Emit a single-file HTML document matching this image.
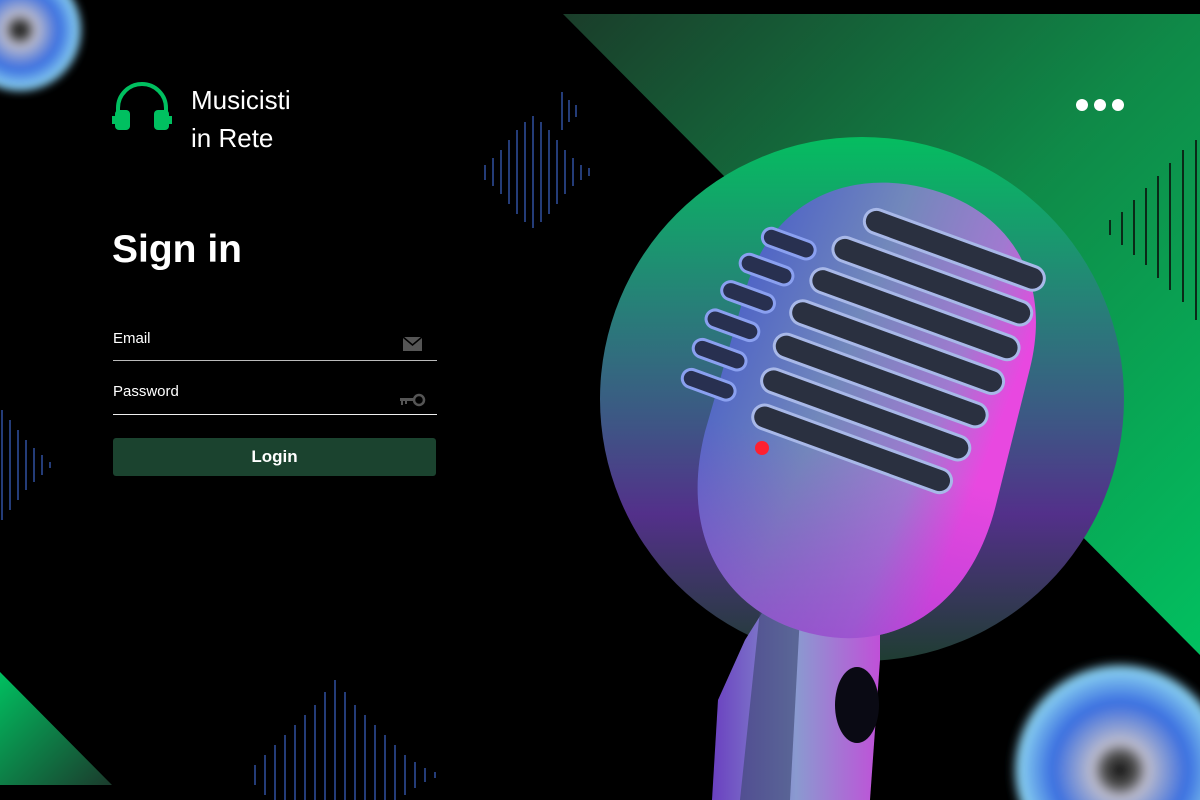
<!DOCTYPE html>
<html><head><style>
html,body{margin:0;width:1200px;height:800px;overflow:hidden}
body{background:#000;position:relative;font-family:"Liberation Sans",sans-serif;color:#fff}
.a{position:absolute}
</style></head><body>
<svg class="a" style="left:0;top:0;display:block" width="1200" height="800">
<defs>
<linearGradient id="tri" x1="0" y1="0" x2="1" y2="1"><stop offset="0" stop-color="#1a3d2a"/><stop offset=".5" stop-color="#0f8a48"/><stop offset="1" stop-color="#02c060"/></linearGradient>
<linearGradient id="circ" x1="0" y1="0" x2="0" y2="1"><stop offset="0" stop-color="#05bd60"/><stop offset=".35" stop-color="#2a7a7a"/><stop offset=".55" stop-color="#3e5585"/><stop offset=".72" stop-color="#53308a"/><stop offset="1" stop-color="#1f3d32"/></linearGradient>
<linearGradient id="bl" x1="0" y1="0" x2="1" y2="1"><stop offset="0" stop-color="#00c060"/><stop offset="1" stop-color="#1b3a2c"/></linearGradient>
<linearGradient id="mic" x1="0" y1="0" x2="1" y2="0.2"><stop offset="0" stop-color="#4a5fc8"/><stop offset=".45" stop-color="#7288bb"/><stop offset=".8" stop-color="#a07ad0"/><stop offset="1" stop-color="#e848e0"/></linearGradient>
<linearGradient id="shade" x1="0" y1="0" x2="0" y2="1"><stop offset="0" stop-color="#9a3ad0" stop-opacity="0"/><stop offset=".6" stop-color="#9a3ad0" stop-opacity="0"/><stop offset="1" stop-color="#9a3ad0" stop-opacity=".6"/></linearGradient>
<linearGradient id="body" x1="0" y1="0" x2="1" y2="0"><stop offset="0" stop-color="#6a40c0"/><stop offset=".5" stop-color="#8a9ad0"/><stop offset="1" stop-color="#c050d8"/></linearGradient>
<radialGradient id="cd"><stop offset="0" stop-color="#111"/><stop offset=".15" stop-color="#555"/><stop offset=".25" stop-color="#bbc"/><stop offset=".6" stop-color="#3a6ee0"/><stop offset=".9" stop-color="#88d0f0"/><stop offset="1" stop-color="#000" stop-opacity="0"/></radialGradient>
<filter id="blur"><feGaussianBlur stdDeviation="4"/></filter>
</defs>
<polygon points="563,14 1200,14 1200,655" fill="url(#tri)"/>
<polygon points="0,672 112,785 0,785" fill="url(#bl)"/>
<ellipse cx="862" cy="399" rx="262" ry="262" fill="url(#circ)"/>
<circle cx="20" cy="30" r="65" fill="url(#cd)" filter="url(#blur)"/>
<circle cx="1120" cy="770" r="112" fill="url(#cd)" filter="url(#blur)"/>
<path d="M745 640 L770 600 L880 615 L880 660 L870 800 L712 800 L718 700 Z" fill="url(#body)"/>
<path d="M760 610 L800 615 L790 800 L740 800 Z" fill="#3a4470" opacity=".6"/>
<ellipse cx="857" cy="705" rx="22" ry="38" fill="#0a0a14"/>
<g transform="rotate(14 865 410)">
<path d="M720 330 C720 230 790 180 870 180 C950 180 1015 230 1015 330 L1015 470 C1015 580 950 640 865 640 C780 640 715 580 715 470 Z" fill="url(#mic)"/>
<path d="M720 330 C720 230 790 180 870 180 C950 180 1015 230 1015 330 L1015 470 C1015 580 950 640 865 640 C780 640 715 580 715 470 Z" fill="url(#shade)"/>
</g>
<g transform="rotate(20 870 350)" fill="#2a3040" stroke="#a8b8e8" stroke-width="3">
<rect x="820" y="215" width="190" height="24" rx="12"/>
<rect x="800" y="252" width="210" height="24" rx="12"/>
<rect x="790" y="289" width="220" height="24" rx="12"/>
<rect x="782" y="326" width="225" height="24" rx="12"/>
<rect x="778" y="363" width="225" height="24" rx="12"/>
<rect x="778" y="400" width="220" height="24" rx="12"/>
<rect x="782" y="437" width="210" height="24" rx="12"/>
</g>
<g transform="rotate(20 760 330)" fill="#283050" stroke="#8aa0f0" stroke-width="3">
<rect x="730" y="230" width="55" height="18" rx="9"/>
<rect x="718" y="262" width="55" height="18" rx="9"/>
<rect x="710" y="294" width="55" height="18" rx="9"/>
<rect x="705" y="326" width="55" height="18" rx="9"/>
<rect x="703" y="358" width="55" height="18" rx="9"/>
<rect x="703" y="390" width="55" height="18" rx="9"/>
</g>
<circle cx="762" cy="448" r="7" fill="#ff2030"/>
<circle cx="1082" cy="105" r="6" fill="#fff"/><circle cx="1100" cy="105" r="6" fill="#fff"/><circle cx="1118" cy="105" r="6" fill="#fff"/>
<g stroke="#3050a0" stroke-width="1.5">
<line x1="485" y1="165" x2="485" y2="180"/><line x1="493" y1="158" x2="493" y2="186"/><line x1="501" y1="150" x2="501" y2="194"/><line x1="509" y1="140" x2="509" y2="204"/><line x1="517" y1="130" x2="517" y2="214"/><line x1="525" y1="122" x2="525" y2="222"/><line x1="533" y1="116" x2="533" y2="228"/><line x1="541" y1="122" x2="541" y2="222"/><line x1="549" y1="130" x2="549" y2="214"/><line x1="557" y1="140" x2="557" y2="204"/><line x1="565" y1="150" x2="565" y2="194"/><line x1="573" y1="158" x2="573" y2="186"/><line x1="581" y1="165" x2="581" y2="180"/><line x1="589" y1="168" x2="589" y2="176"/>
<line x1="2" y1="410" x2="2" y2="520"/><line x1="10" y1="420" x2="10" y2="510"/><line x1="18" y1="430" x2="18" y2="500"/><line x1="26" y1="440" x2="26" y2="490"/><line x1="34" y1="448" x2="34" y2="482"/><line x1="42" y1="455" x2="42" y2="475"/><line x1="50" y1="462" x2="50" y2="468"/>
<line x1="255" y1="765" x2="255" y2="785"/><line x1="265" y1="755" x2="265" y2="795"/><line x1="275" y1="745" x2="275" y2="800"/><line x1="285" y1="735" x2="285" y2="800"/><line x1="295" y1="725" x2="295" y2="800"/><line x1="305" y1="715" x2="305" y2="800"/><line x1="315" y1="705" x2="315" y2="800"/><line x1="325" y1="692" x2="325" y2="800"/><line x1="335" y1="680" x2="335" y2="800"/><line x1="345" y1="692" x2="345" y2="800"/><line x1="355" y1="705" x2="355" y2="800"/><line x1="365" y1="715" x2="365" y2="800"/><line x1="375" y1="725" x2="375" y2="800"/><line x1="385" y1="735" x2="385" y2="800"/><line x1="395" y1="745" x2="395" y2="800"/><line x1="405" y1="755" x2="405" y2="795"/><line x1="415" y1="762" x2="415" y2="788"/><line x1="425" y1="768" x2="425" y2="782"/><line x1="435" y1="772" x2="435" y2="778"/>
<line x1="562" y1="92" x2="562" y2="130"/><line x1="569" y1="100" x2="569" y2="122"/><line x1="576" y1="105" x2="576" y2="117"/>
</g>
<g stroke="#0a2a18" stroke-width="2">
<line x1="1110" y1="220" x2="1110" y2="235"/><line x1="1122" y1="212" x2="1122" y2="245"/><line x1="1134" y1="200" x2="1134" y2="255"/><line x1="1146" y1="188" x2="1146" y2="265"/><line x1="1158" y1="176" x2="1158" y2="278"/><line x1="1170" y1="163" x2="1170" y2="290"/><line x1="1183" y1="150" x2="1183" y2="302"/><line x1="1196" y1="140" x2="1196" y2="320"/>
</g>
<path d="M118 118 V108 A24 24 0 0 1 166 108 V118" fill="none" stroke="#00c060" stroke-width="4"/>
<rect x="115" y="110" width="15" height="20" rx="4" fill="#00c060"/><rect x="154" y="110" width="15" height="20" rx="4" fill="#00c060"/>
<rect x="112" y="116" width="4" height="8" fill="#00c060"/><rect x="168" y="116" width="4" height="8" fill="#00c060"/>
<rect x="113" y="360" width="324" height="1" fill="#bbb"/>
<rect x="113" y="414" width="324" height="1" fill="#eee"/>
<rect x="403" y="337" width="19" height="14" fill="#555"/>
<path d="M403 337 L412.5 345 L422 337" fill="none" stroke="#000" stroke-width="1.5"/>
<circle cx="419" cy="400" r="5" fill="none" stroke="#555" stroke-width="2.5"/>
<rect x="400" y="398" width="15" height="3" fill="#555"/><rect x="401" y="398" width="2" height="7" fill="#555"/><rect x="405" y="398" width="2" height="6" fill="#555"/>
</svg>
<div class="a" style="left:191px;top:81px;font-size:26px;line-height:38px">Musicisti<br>in Rete</div>
<div class="a" style="left:112px;top:228px;font-size:39px;font-weight:bold">Sign in</div>
<div class="a" style="left:113px;top:330px;font-size:15px">Email</div>
<div class="a" style="left:113px;top:383px;font-size:15px">Password</div>
<div class="a" style="left:113px;top:438px;width:323px;height:38px;background:#1b432f;border-radius:3px;text-align:center;line-height:38px;font-size:17px;font-weight:bold">Login</div>
</body></html>
